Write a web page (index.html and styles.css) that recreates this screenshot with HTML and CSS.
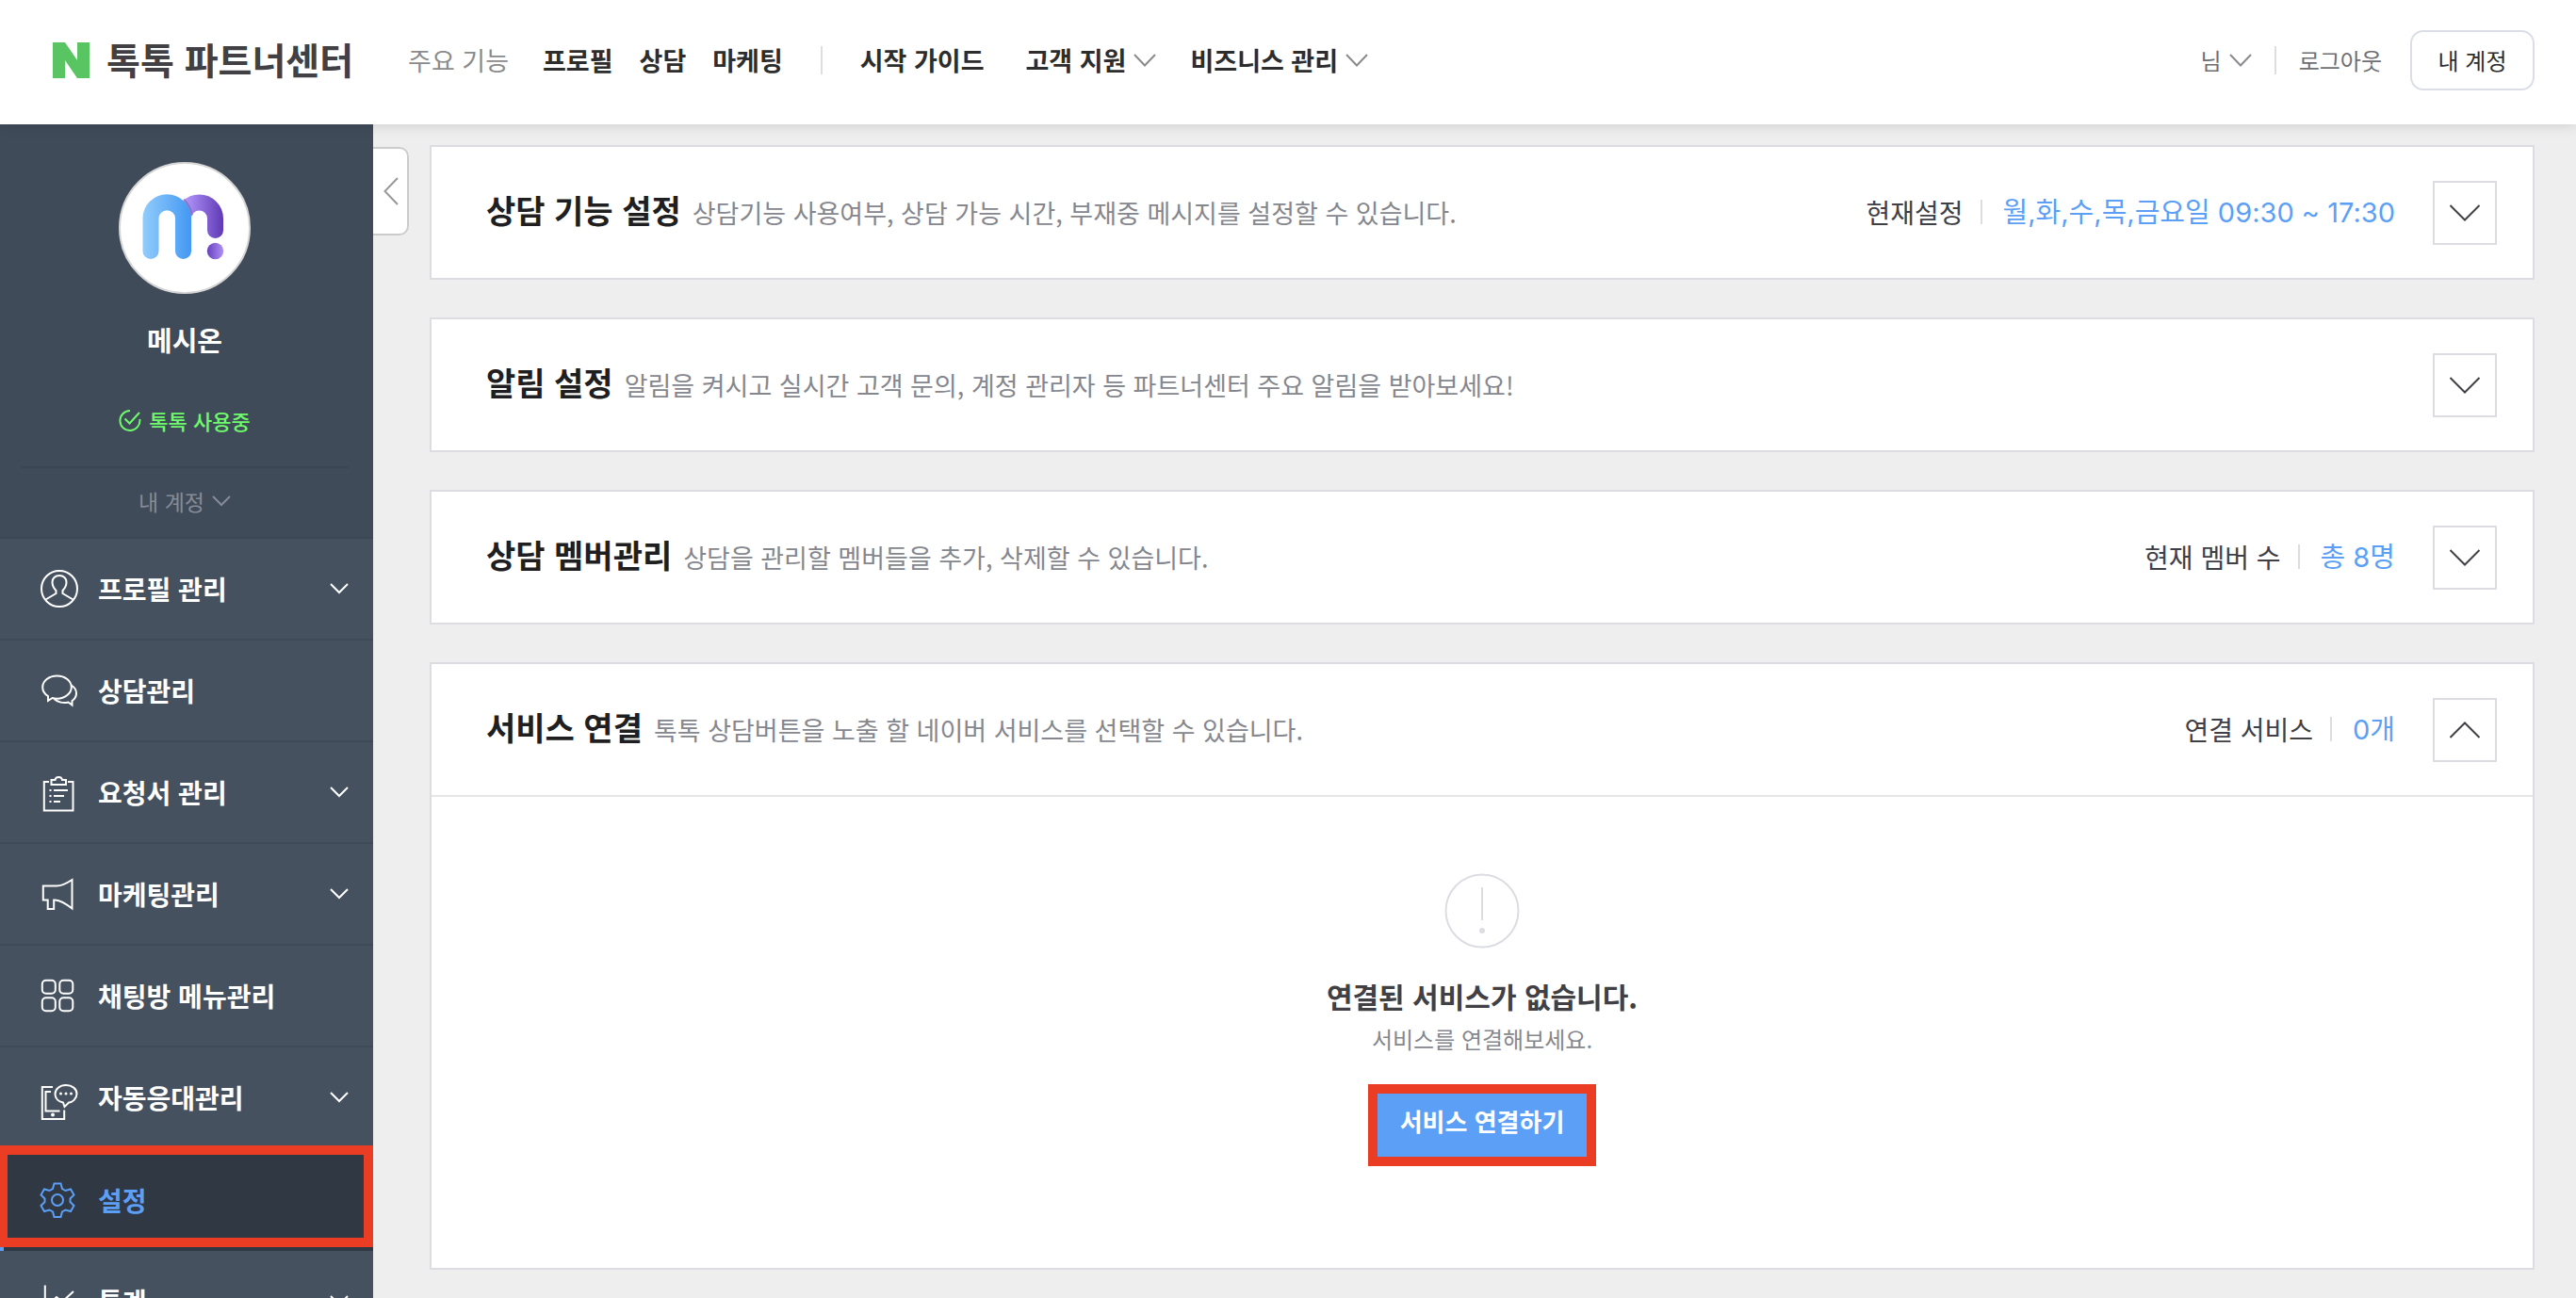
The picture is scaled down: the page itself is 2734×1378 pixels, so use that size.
FILE: index.html
```html
<!DOCTYPE html>
<html lang="ko">
<head>
<meta charset="utf-8">
<meta name="viewport" content="width=device-width, initial-scale=1">
<title>톡톡 파트너센터</title>
<link rel="stylesheet" href="styles.css">
</head>
<body>
<svg class="defs" width="0" height="0" aria-hidden="true">
  <symbol id="chev-sm" viewBox="0 0 24 14"><path d="M1 1l11 11.500L23 1"/></symbol>
  <symbol id="chev-menu" viewBox="0 0 20 12"><path d="M1 1l9 9 9-9"/></symbol>
  <symbol id="chev-lg" viewBox="0 0 34 18"><path d="M1.500 1l15.500 15.500L32.500 1"/></symbol>
</svg>

<header class="header">
  <a class="logo" href="#">
    <svg class="logo-mark" viewBox="0 0 39 38" aria-hidden="true"><path d="M0 0h13l13 19V0h13v38H26L13 19v19H0z"/></svg>
    <span>톡톡 파트너센터</span>
  </a>
  <nav class="gnb">
    <span class="gnb-label">주요 기능</span>
    <a href="#">프로필</a>
    <a href="#">상담</a>
    <a href="#">마케팅</a>
    <i class="bar"></i>
    <div class="gnb-sub">
      <a href="#">시작 가이드</a>
      <a href="#">고객 지원<svg class="chev-sm"><use href="#chev-sm"/></svg></a>
      <a href="#">비즈니스 관리<svg class="chev-sm"><use href="#chev-sm"/></svg></a>
    </div>
  </nav>
  <div class="user">
    <a href="#">님<svg class="chev-sm"><use href="#chev-sm"/></svg></a>
    <i class="bar"></i>
    <a href="#">로그아웃</a>
    <button class="account" type="button">내 계정</button>
  </div>
</header>

<div class="body">
  <aside class="side">
    <section class="profile">
      <svg class="avatar" viewBox="0 0 140 140" role="img" aria-label="메시온">
        <defs>
          <linearGradient id="blue" gradientUnits="userSpaceOnUse" x1="25" y1="0" x2="77" y2="0"><stop offset="0" stop-color="#93cdfb"/><stop offset="1" stop-color="#4398f3"/></linearGradient>
          <linearGradient id="violet" gradientUnits="userSpaceOnUse" x1="70" y1="0" x2="111" y2="0"><stop offset="0" stop-color="#b397fb"/><stop offset="1" stop-color="#5f39b5"/></linearGradient>
          <linearGradient id="dot" x1="0" y1="0" x2="1" y2="0"><stop offset="0" stop-color="#6740bd"/><stop offset="1" stop-color="#ad90f5"/></linearGradient>
        </defs>
        <circle cx="70" cy="70" r="69" fill="#fff" stroke="#d5d5d5" stroke-width="2"/>
        <path d="M68.500 60a17 17 0 0 1 34 0v12.500" fill="none" stroke="url(#violet)" stroke-width="17" stroke-linecap="round"/>
        <path d="M69 39.500q7 6.500 9 17" fill="none" stroke="#7d5fae" stroke-width="2" opacity=".6"/>
        <path d="M34 94.500V60a17 17 0 0 1 34.500 0v34.500" fill="none" stroke="url(#blue)" stroke-width="17" stroke-linecap="round"/>
        <circle cx="102.500" cy="94.500" r="8.700" fill="url(#dot)"/>
      </svg>
      <strong class="name">메시온</strong>
      <p class="status">
        <svg class="status-icon" viewBox="0 0 24 24" aria-hidden="true"><path d="M12 2A10.500 10.500 0 1 0 22.300 11M6.500 10.500l5 5L22 4"/></svg>
        톡톡 사용중
      </p>
      <button class="my" type="button">내 계정<svg class="chev-menu"><use href="#chev-menu"/></svg></button>
    </section>
    <nav class="menu">
      <a href="#">
        <svg class="icon" viewBox="0 0 44 44"><circle cx="23" cy="22" r="19"/><path d="M8.500 33.500l11-6.500v-3c-3-3-4-6-4-9 0-4 3-7 7.500-7s7.500 3 7.500 7c0 3-1 6-4 9v3l11 6.500"/></svg>
        <span>프로필 관리</span><svg class="chev-menu"><use href="#chev-menu"/></svg>
      </a>
      <a href="#">
        <svg class="icon" viewBox="0 0 44 44"><path d="M11 33v-5C7.500 26 5.200 22.500 5.200 18.500 5.200 12 12 6.500 20.500 6.500S35.800 12 35.800 18.500 29 30.800 20.500 30.800c-2 0-3.500-.3-5-.8z"/><path d="M17.500 31c3.500 3.500 10 5 15 3.500l4 3v-4.500c3-2 4.500-5 4.500-8 0-3.500-2-6.500-5.500-8.500"/></svg>
        <span>상담관리</span>
      </a>
      <a href="#">
        <svg class="icon" viewBox="0 0 44 44"><path d="M12 11H6.800v30.500h30.700V11H32M14.500 14V9h4c.5-4 7-4 7.500 0h4v5zM17 20h15M17 26h11M17 32h7M12.500 20h2M12.500 26h2M12.500 32h2"/></svg>
        <span>요청서 관리</span><svg class="chev-menu"><use href="#chev-menu"/></svg>
      </a>
      <a href="#">
        <svg class="icon" viewBox="0 0 44 44"><path d="M5.800 13.500H20c6 0 12-3.500 16.500-6.500v30.500c-4.500-3.500-12-8.500-18-9h-1.300v9.500h-6.500v-9.500H5.800z"/></svg>
        <span>마케팅관리</span><svg class="chev-menu"><use href="#chev-menu"/></svg>
      </a>
      <a href="#">
        <svg class="icon" viewBox="0 0 44 44"><rect x="4.800" y="5.800" width="14" height="14" rx="4"/><rect x="23.300" y="5.800" width="14" height="14" rx="4"/><rect x="4.800" y="24.300" width="14" height="14" rx="4"/><rect x="23.300" y="24.300" width="14" height="14" rx="4"/></svg>
        <span>채팅방 메뉴관리</span>
      </a>
      <a href="#">
        <svg class="icon" viewBox="0 0 44 44"><path d="M16 11H4.800v34h23.400V35.500M14 16H8.500v20.500h15"/><path d="M27 27.500c-5-1-8.500-4.500-8.500-9C18.500 13 23.500 9 30 9s11.500 4 11.500 9.200c0 5.300-5 9.300-8.500 9.300L28.500 32z"/><g class="solid"><circle cx="16" cy="40.500" r="2"/><circle cx="24.500" cy="18" r="1.500"/><circle cx="30" cy="18" r="1.500"/><circle cx="35.500" cy="18" r="1.500"/></g></svg>
        <span>자동응대관리</span><svg class="chev-menu"><use href="#chev-menu"/></svg>
      </a>
      <a class="on" href="#" aria-current="page">
        <svg class="icon" viewBox="0 0 44 44"><circle cx="21" cy="22" r="6"/><path d="M17.500 4.500h7l1.500 5.500 3.500 2 5.500-1.500 3.500 6-4 4v3.500l4 4-3.500 6-5.500-1.500-3.500 2-1.500 5.500h-7L16 34.500l-3.500-2L7 34l-3.500-6 4-4v-3.500l-4-4 3.500-6 5.500 1.500 3.500-2z"/></svg>
        <span>설정</span>
      </a>
      <a href="#">
        <svg class="icon" viewBox="0 0 44 44"><path d="M7.800 5.500V38H38M13 25l7-7 6 5 12-11"/></svg>
        <span>통계</span><svg class="chev-menu"><use href="#chev-menu"/></svg>
      </a>
      <div class="mark mark-menu"></div>
    </nav>
  </aside>

  <button class="fold" type="button" aria-label="메뉴 접기"><svg viewBox="0 0 16 30"><path d="M15 1L1.500 15 15 29"/></svg></button>

  <main class="main">
    <section class="card">
      <header class="card-head">
        <h2>상담 기능 설정</h2>
        <p>상담기능 사용여부, 상담 가능 시간, 부재중 메시지를 설정할 수 있습니다.</p>
        <div class="now"><span>현재설정</span><b>월,화,수,목,금요일 09:30 ~ 17:30</b></div>
        <button class="toggle" type="button" aria-label="펼치기"><svg><use href="#chev-lg"/></svg></button>
      </header>
    </section>
    <section class="card">
      <header class="card-head">
        <h2>알림 설정</h2>
        <p>알림을 켜시고 실시간 고객 문의, 계정 관리자 등 파트너센터 주요 알림을 받아보세요!</p>
        <button class="toggle" type="button" aria-label="펼치기"><svg><use href="#chev-lg"/></svg></button>
      </header>
    </section>
    <section class="card">
      <header class="card-head">
        <h2>상담 멤버관리</h2>
        <p>상담을 관리할 멤버들을 추가, 삭제할 수 있습니다.</p>
        <div class="now"><span>현재 멤버 수</span><b>총 8명</b></div>
        <button class="toggle" type="button" aria-label="펼치기"><svg><use href="#chev-lg"/></svg></button>
      </header>
    </section>
    <section class="card">
      <header class="card-head">
        <h2>서비스 연결</h2>
        <p>톡톡 상담버튼을 노출 할 네이버 서비스를 선택할 수 있습니다.</p>
        <div class="now"><span>연결 서비스</span><b>0개</b></div>
        <button class="toggle open" type="button" aria-label="접기"><svg><use href="#chev-lg"/></svg></button>
      </header>
      <div class="empty">
        <svg class="empty-icon" viewBox="0 0 80 80" aria-hidden="true"><circle cx="40" cy="40" r="38.500"/><path d="M40 15v35"/><circle class="pt" cx="40" cy="61" r="3"/></svg>
        <strong>연결된 서비스가 없습니다.</strong>
        <p>서비스를 연결해보세요.</p>
        <button class="connect" type="button">서비스 연결하기</button>
      </div>
    </section>
  </main>
</div>
</body>
</html>
```
FILE: styles.css
```css
* { box-sizing: border-box; margin: 0; padding: 0; }
body {
  display: flex;
  flex-direction: column;
  height: 100vh;
  overflow: hidden;
  background: #eee;
  color: #303038;
  font-family: "Noto Sans CJK KR", "Noto Sans", sans-serif;
}
a { color: inherit; text-decoration: none; }
button { font: inherit; color: inherit; background: none; border: 0; cursor: pointer; }
svg { fill: none; stroke: currentColor; stroke-width: 2; flex: none; }
.defs { position: absolute; }
.bar { width: 2px; height: 30px; background: #dcdee3; }
.chev-sm { width: 24px; height: 14px; color: #8b8b8f; }
.chev-menu { width: 20px; height: 12px; }

/* header */
.header {
  position: relative;
  z-index: 2;
  flex: none;
  display: flex;
  align-items: center;
  height: 132px;
  padding: 0 44px 4px 56px;
  background: #fff;
  box-shadow: 0 0 14px rgba(0, 0, 0, .16);
}
.logo {
  display: flex;
  align-items: center;
  gap: 18px;
  color: #404045;
  font-size: 39px;
  font-weight: 700;
  line-height: 56px;
}
.logo span { padding-bottom: 4px; }
.logo-mark { width: 39px; height: 38px; fill: #58c462; stroke: none; }
.gnb {
  display: flex;
  align-items: center;
  gap: 28px;
  margin-left: 58px;
  font-size: 27px;
  font-weight: 700;
  line-height: 40px;
}
.gnb-label { margin-right: 8px; color: #8b8b8b; font-weight: 400; }
.gnb .bar { margin: 0 12px; }
.gnb a { display: flex; align-items: center; gap: 8px; color: #2d2d2d; }
.gnb-sub { display: flex; gap: 44px; }
.gnb-sub a + a + a { margin-left: -8px; }
.user {
  display: flex;
  align-items: center;
  gap: 24px;
  margin-left: auto;
  color: #6f6f73;
  font-size: 24px;
  line-height: 36px;
}
.user a { display: flex; align-items: center; gap: 8px; }
.account {
  width: 132px;
  height: 64px;
  margin-left: 6px;
  border: 2px solid #dcdee5;
  border-radius: 14px;
  color: #2d2d2d;
}

.body { flex: 1; display: flex; align-items: flex-start; min-height: 0; }

/* side menu */
.side {
  flex: none;
  align-self: stretch;
  width: 396px;
  overflow: hidden;
  background: #465160;
  color: #fff;
}
.profile {
  display: flex;
  flex-direction: column;
  align-items: center;
  height: 440px;
  padding: 40px 26px 0 22px;
  background: #404b5a;
  border-bottom: 2px solid #3c4755;
}
.avatar { width: 140px; height: 140px; stroke: none; }
.name { margin-top: 26px; font-size: 29px; line-height: 44px; }
.status {
  display: flex;
  align-items: center;
  gap: 8px;
  margin-top: 46px;
  color: #6ffa6b;
  font-size: 22px;
  font-weight: 500;
  line-height: 36px;
}
.status-icon { width: 24px; height: 24px; }
.my {
  display: flex;
  align-items: center;
  justify-content: center;
  align-self: stretch;
  gap: 8px;
  margin-top: 31px;
  padding-top: 17px;
  border-top: 2px solid #3b4654;
  color: #858c97;
  font-size: 23px;
  line-height: 36px;
}
.menu { position: relative; }
.menu a {
  display: flex;
  align-items: center;
  height: 108px;
  padding: 0 26px 0 40px;
  border-bottom: 2px solid #3f4a58;
  font-size: 28px;
  font-weight: 700;
}
.menu span { margin: 0 auto 0 20px; }
.icon { width: 44px; height: 44px; overflow: visible; }
.solid { fill: currentColor; stroke: none; }
.menu .on {
  background: #303843;
  border-bottom: 0;
  box-shadow: inset 4px 0 #5c9ff6;
  color: #5c9ff6;
}
.mark { position: absolute; border: 10px solid #ea3d24; }
.mark-menu { top: 644px; left: -2px; right: 0; height: 108px; }

.fold {
  flex: none;
  width: 38px;
  height: 94px;
  margin-top: 24px;
  padding: 4px 0 0 2px;
  background: #fff;
  border: 2px solid #ccc;
  border-left: 0;
  border-radius: 0 10px 10px 0;
  color: #999;
}
.fold svg { width: 16px; height: 30px; }

/* cards */
.main {
  flex: 1;
  display: flex;
  flex-direction: column;
  gap: 40px;
  min-width: 0;
  padding: 22px 44px 30px 22px;
}
.card { background: #fff; border: 2px solid #dcdde2; }
.card-head {
  display: flex;
  align-items: center;
  height: 139px;
  padding: 0 38px 0 58px;
}
h2 { padding-bottom: 6px; color: #1f1f22; font-size: 34px; font-weight: 700; line-height: 48px; }
.card-head p { margin-left: 12px; color: #85878e; font-size: 27px; line-height: 40px; }
.now { display: flex; align-items: center; margin-left: auto; font-size: 28px; line-height: 40px; color: #3f4045; }
.now span { display: flex; align-items: center; padding-bottom: 2px; }
.now span::after { content: ""; width: 2px; height: 26px; margin: 0 22px 0 18px; background: #dcdde2; }
.now b { color: #5c9ff6; font-family: Inter, "Noto Sans CJK KR", sans-serif; font-size: 29px; font-weight: 400; }
.toggle { width: 68px; height: 68px; margin-left: 40px; border: 2px solid #dcdde2; color: #404045; }
p + .toggle { margin-left: auto; }
.toggle svg { display: block; width: 34px; height: 18px; margin: 0 auto; }
.toggle.open svg { transform: rotate(180deg); }

.empty {
  display: flex;
  flex-direction: column;
  align-items: center;
  padding: 81px 0 108px;
  border-top: 2px solid #e6e6e8;
}
.empty-icon { width: 80px; height: 80px; color: #dcdde2; }
.empty-icon .pt { fill: currentColor; stroke: none; }
.empty strong { margin-top: 26px; color: #404045; font-size: 30px; line-height: 48px; }
.empty p { color: #85878e; font-size: 24px; line-height: 44px; }
.connect {
  height: 87px;
  margin-top: 26px;
  padding: 0 24px 10px;
  background: #5c9ff6;
  border: 10px solid #ea3d24;
  color: #fff;
  font-size: 26px;
  font-weight: 700;
  line-height: 36px;
}
```
